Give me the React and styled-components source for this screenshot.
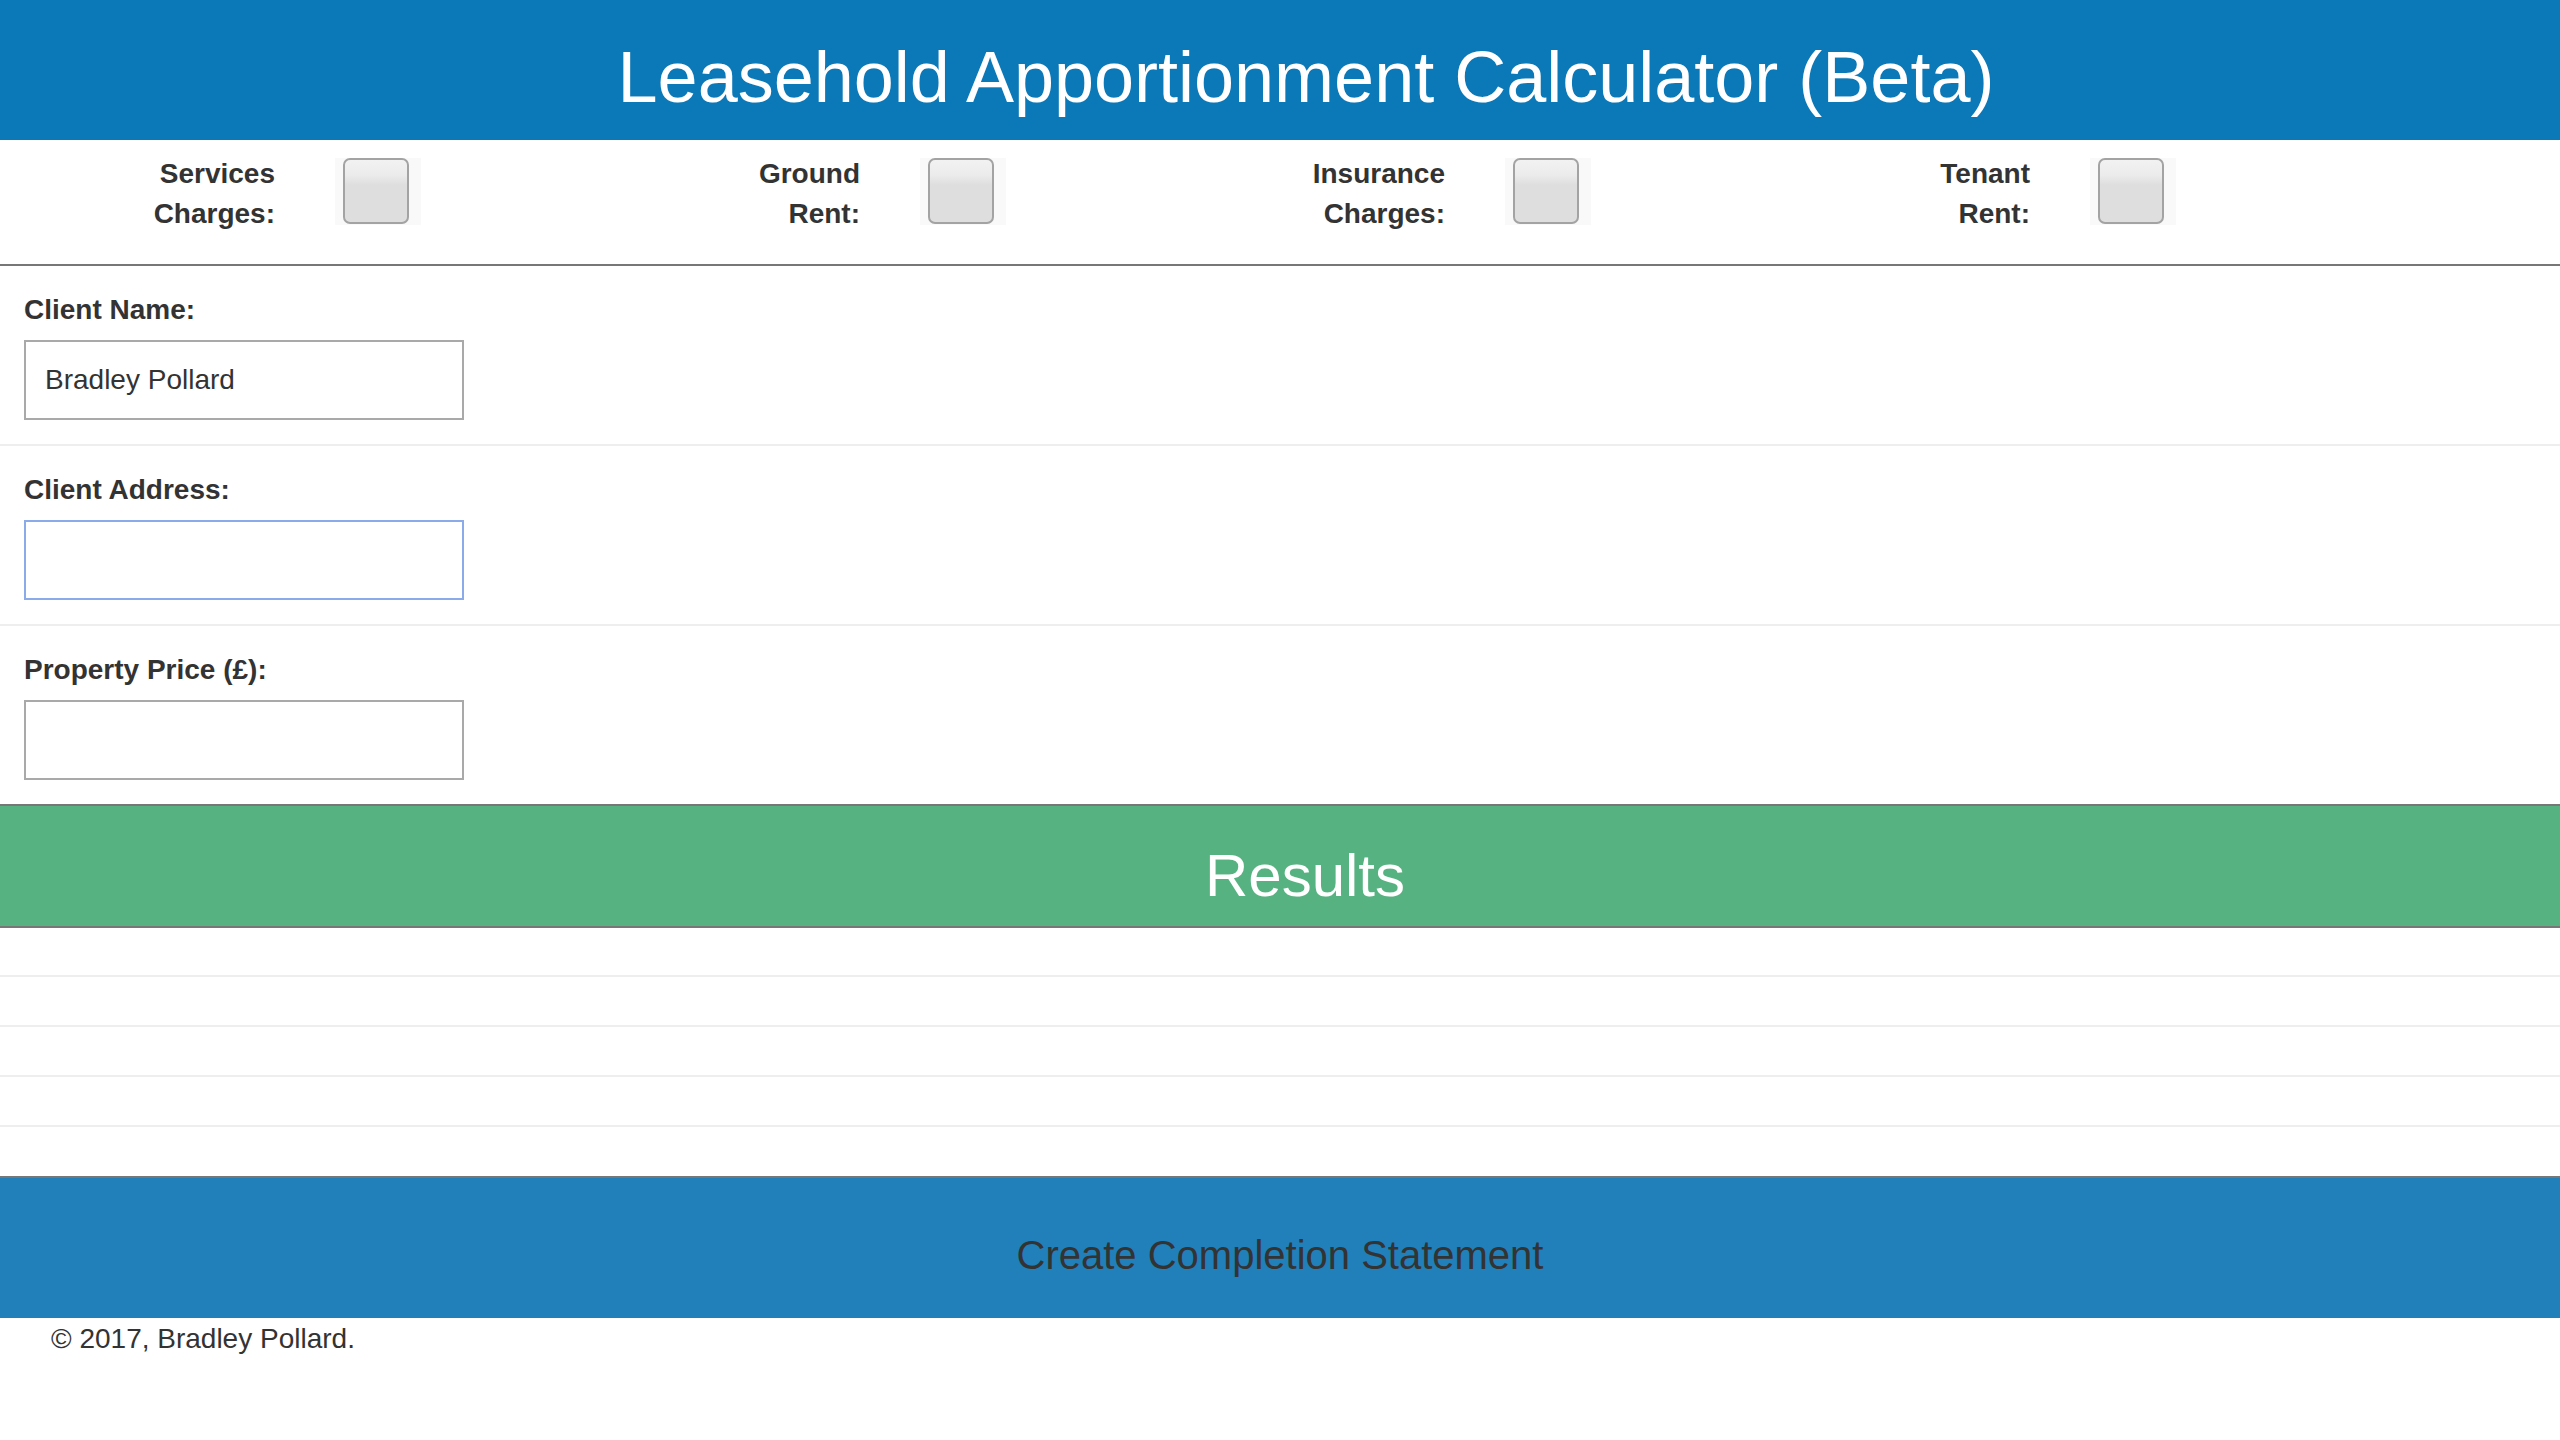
import React from "react";
import styled, { createGlobalStyle } from "styled-components";

const GlobalStyle = createGlobalStyle`
    html, body {
        margin: 0;
        padding: 0;
        background: #ffffff;
    }
    body {
        font-family: "Liberation Sans", Arial, Helvetica, sans-serif;
        font-size: 28px;
        color: #333333;
    }
    * {
        box-sizing: border-box;
    }
`;

const options = [
    ["Services", "Charges:"],
    ["Ground", "Rent:"],
    ["Insurance", "Charges:"],
    ["Tenant", "Rent:"],
];

const fields = [
    { label: "Client Name:", value: "Bradley Pollard" },
    { label: "Client Address:", value: "", focused: true },
    { label: "Property Price (£):", value: "" },
];

const App = () => {
    return (
        <Page>
            <GlobalStyle />
            <Header>
                <Title>Leasehold Apportionment Calculator (Beta)</Title>
            </Header>

            {/* the four charge toggles */}
            <OptionsBar>
                {options.map(([first, second], index) => (
                    <Option key={index}>
                        <OptionLabel>
                            {first}
                            <br />
                            {second}
                        </OptionLabel>
                        <CheckWrap>
                            <Checkbox type="checkbox" />
                        </CheckWrap>
                    </Option>
                ))}
            </OptionsBar>

            {fields.map((field, index) => (
                <FormGroup key={index} last={index === fields.length - 1}>
                    <Label>{field.label}</Label>
                    <Input defaultValue={field.value} focused={field.focused} />
                </FormGroup>
            ))}

            <ResultsBar>
                <ResultsTitle>Results</ResultsTitle>
            </ResultsBar>
            <Table>
                <tbody>
                    {[0, 1, 2, 3, 4].map((row) => (
                        <Row key={row} first={row === 0}>
                            <td>&nbsp;</td>
                        </Row>
                    ))}
                </tbody>
            </Table>

            <CreateButton>Create Completion Statement</CreateButton>
            <Footer>© 2017, Bradley Pollard.</Footer>
        </Page>
    );
};

const Page = styled.div`
    width: 100%;
    min-height: 1440px;
    background: #ffffff;
`;
const Header = styled.header`
    height: 140px;
    background: #0b78b7;
    padding-top: 37px;
    padding-left: 52px;
`;
const Title = styled.h1`
    margin: 0;
    font-size: 72px;
    font-weight: normal;
    line-height: 80px;
    color: #ffffff;
    text-align: center;
`;
const OptionsBar = styled.div`
    display: flex;
    padding: 14px 0 30px 112px;
    border-bottom: 2px solid #777777;
`;
const Option = styled.div`
    width: 585px;
    display: flex;
    align-items: flex-start;
`;
const OptionLabel = styled.div`
    width: 163px;
    text-align: right;
    font-weight: bold;
    line-height: 40px;
`;
const CheckWrap = styled.div`
    margin-left: 60px;
    margin-top: 4px;
    padding: 0 12px 1px 8px;
    background: #f9f9f9;
    display: flex;
`;
const Checkbox = styled.input`
    appearance: none;
    -webkit-appearance: none;
    margin: 0;
    width: 66px;
    height: 66px;
    border: 2px solid #a3a3a3;
    border-radius: 7px;
    background: linear-gradient(to bottom, #f2f2f2 0%, #ebebeb 25%, #dedede 40%, #dedede 100%);
    cursor: pointer;
`;
const FormGroup = styled.div`
    padding: 24px 24px 24px 24px;
    border-bottom: ${(props) => (props.last ? "none" : "2px solid #eeeeee")};
`;
const Label = styled.label`
    display: block;
    font-weight: bold;
    line-height: 40px;
    margin-bottom: 10px;
`;
const Input = styled.input`
    display: block;
    width: 440px;
    height: 80px;
    padding: 0 19px;
    border: 2px solid ${(props) => (props.focused ? "#8aaaea" : "#a9a9a9")};
    font-family: "Liberation Sans", Arial, sans-serif;
    font-size: 28px;
    color: #333333;
    outline: none;
    background: #ffffff;
`;
const ResultsBar = styled.div`
    height: 124px;
    background: #56b280;
    border-top: 2px solid #777777;
    border-bottom: 2px solid #777777;
    padding-top: 37px;
    padding-left: 50px;
`;
const ResultsTitle = styled.h2`
    margin: 0;
    font-size: 60px;
    font-weight: normal;
    line-height: 66px;
    color: #ffffff;
    text-align: center;
`;
const Table = styled.table`
    width: 100%;
    border-collapse: collapse;
`;
const Row = styled.tr`
    td {
        height: ${(props) => (props.first ? "48px" : "50px")};
        padding: 0;
        border-top: ${(props) => (props.first ? "none" : "2px solid #eeeeee")};
        line-height: 1;
    }
`;
const CreateButton = styled.button`
    display: block;
    width: 100%;
    height: 142px;
    margin: 0;
    padding: 14px 0 0 0;
    border: none;
    border-top: 2px solid #777777;
    background: #2180b9;
    font-family: "Liberation Sans", Arial, sans-serif;
    font-size: 40px;
    line-height: 44px;
    color: #333333;
    text-align: center;
    cursor: pointer;
`;
const Footer = styled.footer`
    padding: 1px 0 0 51px;
    line-height: 40px;
`;

export default App;
